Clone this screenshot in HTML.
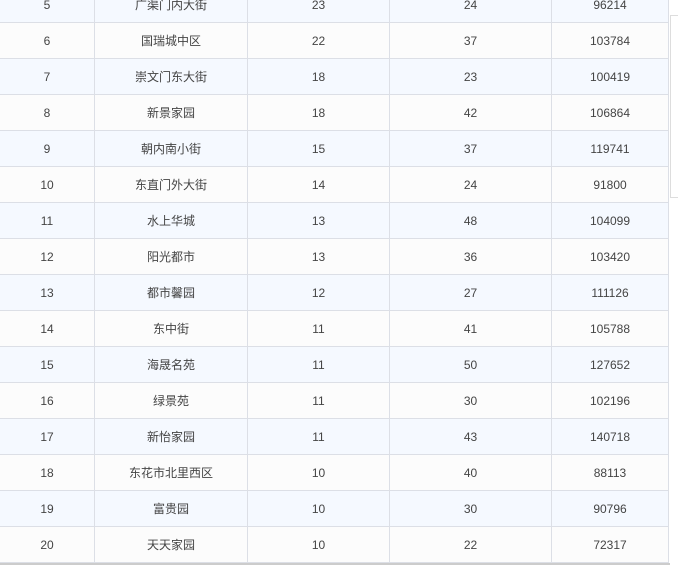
<!DOCTYPE html>
<html><head><meta charset="utf-8"><style>
body{margin:0;width:678px;height:567px;overflow:hidden;background:#fff;font-family:"Liberation Sans","Noto Sans CJK SC",sans-serif;font-size:12px;color:#444;position:relative}
table{position:absolute;left:-1px;top:-14px;border-collapse:collapse;table-layout:fixed;width:669px}
td{height:35px;border:1px solid #dcdfe6;text-align:center;padding:0}
tr:nth-child(odd) td{background:#f5f9ff}
tr:nth-child(even) td{background:#fcfcfc}
.sb{position:absolute;left:670px;top:15px;width:10px;height:181px;border:1px solid #ddd;border-right:none;background:#fff}
.bl{position:absolute;left:0;top:563px;width:670px;height:2px;background:#ccc}
</style></head><body>
<table>
<colgroup><col style="width:95px"><col style="width:153px"><col style="width:142px"><col style="width:162px"><col style="width:117px"></colgroup>
<tr><td>5</td><td>广渠门内大街</td><td>23</td><td>24</td><td>96214</td></tr>
<tr><td>6</td><td>国瑞城中区</td><td>22</td><td>37</td><td>103784</td></tr>
<tr><td>7</td><td>崇文门东大街</td><td>18</td><td>23</td><td>100419</td></tr>
<tr><td>8</td><td>新景家园</td><td>18</td><td>42</td><td>106864</td></tr>
<tr><td>9</td><td>朝内南小街</td><td>15</td><td>37</td><td>119741</td></tr>
<tr><td>10</td><td>东直门外大街</td><td>14</td><td>24</td><td>91800</td></tr>
<tr><td>11</td><td>水上华城</td><td>13</td><td>48</td><td>104099</td></tr>
<tr><td>12</td><td>阳光都市</td><td>13</td><td>36</td><td>103420</td></tr>
<tr><td>13</td><td>都市馨园</td><td>12</td><td>27</td><td>111126</td></tr>
<tr><td>14</td><td>东中街</td><td>11</td><td>41</td><td>105788</td></tr>
<tr><td>15</td><td>海晟名苑</td><td>11</td><td>50</td><td>127652</td></tr>
<tr><td>16</td><td>绿景苑</td><td>11</td><td>30</td><td>102196</td></tr>
<tr><td>17</td><td>新怡家园</td><td>11</td><td>43</td><td>140718</td></tr>
<tr><td>18</td><td>东花市北里西区</td><td>10</td><td>40</td><td>88113</td></tr>
<tr><td>19</td><td>富贵园</td><td>10</td><td>30</td><td>90796</td></tr>
<tr><td>20</td><td>天天家园</td><td>10</td><td>22</td><td>72317</td></tr>
</table>
<div class="sb"></div>
<div class="bl"></div>
</body></html>
